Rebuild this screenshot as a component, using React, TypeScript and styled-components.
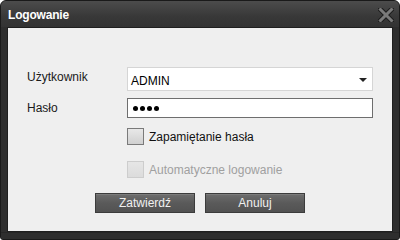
import React from "react";
import styled, { createGlobalStyle } from "styled-components";

const Global = createGlobalStyle`
  html, body { margin: 0; padding: 0; background: #ffffff; }
  body { font-family: "Liberation Sans", Arial, sans-serif; font-size: 12px; }
  * { box-sizing: border-box; }
`;

const Window = styled.div`
  width: 400px;
  height: 240px;
  display: flex;
  flex-direction: column;
  background: #2e2e2e;
  border: 1px solid #1a1a1a;
  border-radius: 6px 6px 3px 3px;
  overflow: hidden;
`;

const TitleBar = styled.div`
  height: 26px;
  flex: none;
  display: flex;
  align-items: center;
  justify-content: space-between;
  padding: 0 5px 0 7px;
  background: linear-gradient(#4c4c4c, #383838 60%, #333333);
`;

const Title = styled.span`
  color: #ffffff;
  font-weight: bold;
  font-size: 12px;
  letter-spacing: -0.2px;
  padding-top: 2px;
`;

const CloseIcon = styled.svg`
  width: 16px;
  height: 14px;
  margin-top: 1px;
`;

const Panel = styled.div`
  flex: 1;
  margin: 0 6px;
  background: #efefef;
  border: 1px solid #1f1f1f;
  display: flex;
  flex-direction: column;
  padding: 39px 19px 0 19px;
`;

const Footer = styled.div`
  height: 7px;
  flex: none;
  background: #2e2e2e;
  border-top: 1px solid #262626;
`;

const FormGrid = styled.div`
  display: grid;
  grid-template-columns: 100px 1fr;
  row-gap: 7px;
  align-items: center;
`;

const Label = styled.label<{ $shift?: number }>`
  color: #1a1a1a;
  font-size: 12px;
  position: relative;
  top: ${(p) => p.$shift ?? 0}px;
`;

const Select = styled.div`
  height: 24px;
  background: #ffffff;
  border: 1px solid #d5d5d5;
  display: flex;
  align-items: center;
  justify-content: space-between;
  padding: 3px 5px 0 3px;
  color: #000000;
  font-size: 12px;
`;

const Arrow = styled.span`
  width: 0;
  height: 0;
  border-left: 4px solid transparent;
  border-right: 4px solid transparent;
  border-top: 4px solid #222222;
  margin-top: -2px;
`;

const Password = styled.div`
  height: 20px;
  background: #ffffff;
  border: 1px solid #6e6e6e;
  display: flex;
  align-items: center;
  gap: 2px;
  padding-left: 5px;
`;

const Dot = styled.span`
  width: 5px;
  height: 5px;
  border-radius: 50%;
  background: #000000;
`;

const Checks = styled.div`
  display: flex;
  flex-direction: column;
  gap: 16px;
  margin: 10px 0 0 100px;
`;

const CheckRow = styled.div<{ $disabled?: boolean }>`
  display: flex;
  align-items: center;
  gap: 5px;
  color: ${(p) => (p.$disabled ? "#a0a0a0" : "#111111")};
  font-size: 12px;
`;

const Box = styled.span<{ $disabled?: boolean }>`
  width: 17px;
  height: 17px;
  flex: none;
  border: 1px solid ${(p) => (p.$disabled ? "#cdcdcd" : "#7a7a7a")};
  background: ${(p) =>
    p.$disabled
      ? "linear-gradient(#e6e6e6, #dcdcdc)"
      : "linear-gradient(#e8e8e8, #d0d0d0)"};
`;

const Buttons = styled.div`
  display: flex;
  justify-content: center;
  gap: 10px;
  margin-top: 15px;
`;

const Button = styled.button`
  width: 100px;
  height: 20px;
  border: 1px solid #3c3c3c;
  background: linear-gradient(#6e6e6e, #5a5a5a 50%, #525252);
  color: #f0f0f0;
  font-family: "Liberation Sans", Arial, sans-serif;
  font-size: 12px;
  padding: 0;
  box-shadow: inset 0 1px 0 #7c7c7c;
`;

export default function App() {
  return (
    <>
      <Global />
      <Window>
        <TitleBar>
          <Title>Logowanie</Title>
          <CloseIcon viewBox="0 0 16 14">
            <path
              d="M2.5 1.5 L13.5 12.5 M13.5 1.5 L2.5 12.5"
              stroke="#1c1c1c"
              strokeWidth="5"
              strokeLinecap="square"
            />
            <path
              d="M2.5 1.5 L13.5 12.5 M13.5 1.5 L2.5 12.5"
              stroke="#7a7a7a"
              strokeWidth="3"
              strokeLinecap="square"
            />
          </CloseIcon>
        </TitleBar>
        <Panel>
          <FormGrid>
            <Label $shift={-2}>Użytkownik</Label>
            <Select>
              <span>ADMIN</span>
              <Arrow />
            </Select>
            <Label>Hasło</Label>
            <Password>
              <Dot />
              <Dot />
              <Dot />
              <Dot />
            </Password>
          </FormGrid>
          <Checks>
            <CheckRow>
              <Box />
              <span>Zapamiętanie hasła</span>
            </CheckRow>
            <CheckRow $disabled>
              <Box $disabled />
              <span>Automatyczne logowanie</span>
            </CheckRow>
          </Checks>
          <Buttons>
            <Button>Zatwierdź</Button>
            <Button>Anuluj</Button>
          </Buttons>
        </Panel>
        <Footer />
      </Window>
    </>
  );
}
